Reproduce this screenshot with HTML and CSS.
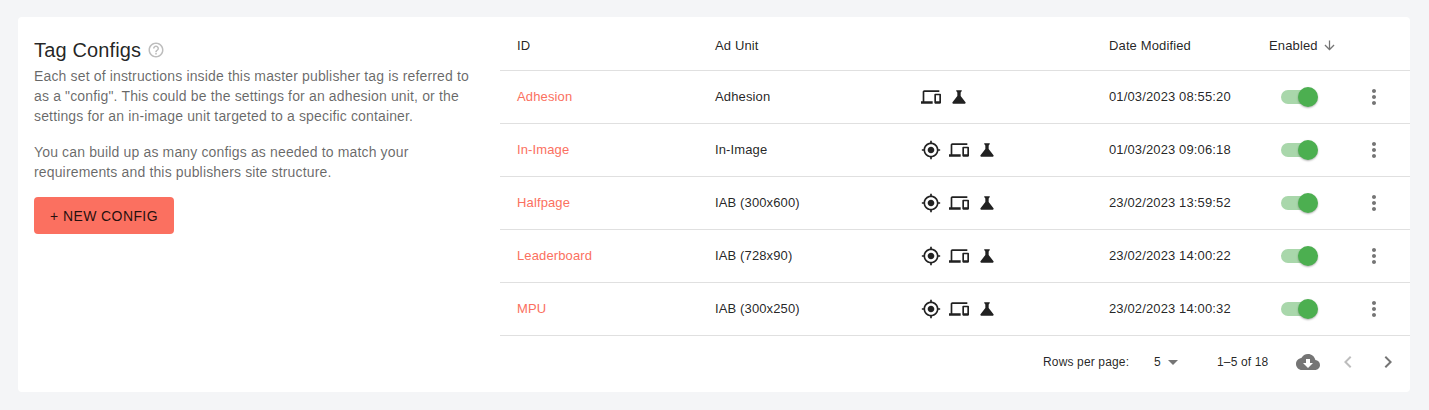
FILE: index.html
```html
<!DOCTYPE html>
<html lang="en">
<head>
<meta charset="utf-8">
<title>Tag Configs</title>
<link rel="stylesheet" href="styles.css">
</head>
<body>
<svg class="defs" width="0" height="0" aria-hidden="true">
  <symbol id="i-gps" viewBox="0 0 24 24"><path d="M12 8c-2.21 0-4 1.79-4 4s1.79 4 4 4 4-1.79 4-4-1.79-4-4-4zm8.94 3c-.46-4.17-3.77-7.48-7.94-7.94V1h-2v2.06C6.83 3.52 3.52 6.83 3.06 11H1v2h2.06c.46 4.17 3.77 7.48 7.94 7.94V23h2v-2.06c4.17-.46 7.48-3.77 7.94-7.94H23v-2h-2.06zM12 19c-3.87 0-7-3.13-7-7s3.13-7 7-7 7 3.13 7 7-3.13 7-7 7z"/></symbol>
  <symbol id="i-devices" viewBox="0 0 24 24"><path d="M4 6h18V4H4c-1.1 0-2 .9-2 2v11H0v3h14v-3H4V6zm19 2h-6c-.55 0-1 .45-1 1v10c0 .55.45 1 1 1h6c.55 0 1-.45 1-1V9c0-.55-.45-1-1-1zm-1 9h-4v-7h4v7z"/></symbol>
  <symbol id="i-science" viewBox="0 0 24 24"><path d="M19.8 18.4 14 10.67V6.5l1.35-1.69c.26-.33.03-.81-.39-.81H9.04c-.42 0-.65.48-.39.81L10 6.5v4.17L4.2 18.4c-.49.66-.02 1.6.8 1.6h14c.82 0 1.29-.94.8-1.6z"/></symbol>
  <symbol id="i-more" viewBox="0 0 24 24"><path d="M12 8c1.1 0 2-.9 2-2s-.9-2-2-2-2 .9-2 2 .9 2 2 2zm0 2c-1.1 0-2 .9-2 2s.9 2 2 2 2-.9 2-2-.9-2-2-2zm0 6c-1.1 0-2 .9-2 2s.9 2 2 2 2-.9 2-2-.9-2-2-2z"/></symbol>
</svg>
<main class="card">
  <section class="intro">
    <h1 class="title">Tag Configs
      <svg class="help" viewBox="0 0 24 24"><path d="M11 18h2v-2h-2v2zm1-16C6.48 2 2 6.48 2 12s4.48 10 10 10 10-4.48 10-10S17.52 2 12 2zm0 18c-4.41 0-8-3.59-8-8s3.59-8 8-8 8 3.59 8 8-3.59 8-8 8zm0-14c-2.21 0-4 1.79-4 4h2c0-1.1.9-2 2-2s2 .9 2 2c0 2-3 1.75-3 5h2c0-2.25 3-2.5 3-5 0-2.21-1.79-4-4-4z"/></svg>
    </h1>
    <p class="copy">Each set of instructions inside this master publisher tag is referred to as a "config". This could be the settings for an adhesion unit, or the settings for an in-image unit targeted to a specific container.</p>
    <p class="copy">You can build up as many configs as needed to match your requirements and this publishers site structure.</p>
    <button class="new-btn" type="button">+ New Config</button>
  </section>
  <section class="table-wrap">
    <table class="configs">
      <colgroup>
        <col class="c-id"><col class="c-unit"><col class="c-icons"><col class="c-date"><col class="c-enabled"><col class="c-menu">
      </colgroup>
      <thead>
        <tr>
          <th>ID</th><th>Ad Unit</th><th></th><th>Date Modified</th>
          <th><span class="sort">Enabled <svg class="sort-icon" viewBox="0 0 24 24"><path d="M20 12l-1.41-1.41L13 16.17V4h-2v12.17l-5.58-5.59L4 12l8 8 8-8z"/></svg></span></th>
          <th></th>
        </tr>
      </thead>
      <tbody>
        <tr>
          <td><a class="link">Adhesion</a></td><td>Adhesion</td>
          <td><div class="icons"><svg class="ic"><use href="#i-devices"/></svg><svg class="ic"><use href="#i-science"/></svg></div></td>
          <td>01/03/2023 08:55:20</td>
          <td><div class="switch"><span class="track"></span><span class="thumb"></span></div></td>
          <td><svg class="more"><use href="#i-more"/></svg></td>
        </tr>
        <tr>
          <td><a class="link">In-Image</a></td><td>In-Image</td>
          <td><div class="icons"><svg class="ic"><use href="#i-gps"/></svg><svg class="ic"><use href="#i-devices"/></svg><svg class="ic"><use href="#i-science"/></svg></div></td>
          <td>01/03/2023 09:06:18</td>
          <td><div class="switch"><span class="track"></span><span class="thumb"></span></div></td>
          <td><svg class="more"><use href="#i-more"/></svg></td>
        </tr>
        <tr>
          <td><a class="link">Halfpage</a></td><td>IAB (300x600)</td>
          <td><div class="icons"><svg class="ic"><use href="#i-gps"/></svg><svg class="ic"><use href="#i-devices"/></svg><svg class="ic"><use href="#i-science"/></svg></div></td>
          <td>23/02/2023 13:59:52</td>
          <td><div class="switch"><span class="track"></span><span class="thumb"></span></div></td>
          <td><svg class="more"><use href="#i-more"/></svg></td>
        </tr>
        <tr>
          <td><a class="link">Leaderboard</a></td><td>IAB (728x90)</td>
          <td><div class="icons"><svg class="ic"><use href="#i-gps"/></svg><svg class="ic"><use href="#i-devices"/></svg><svg class="ic"><use href="#i-science"/></svg></div></td>
          <td>23/02/2023 14:00:22</td>
          <td><div class="switch"><span class="track"></span><span class="thumb"></span></div></td>
          <td><svg class="more"><use href="#i-more"/></svg></td>
        </tr>
        <tr>
          <td><a class="link">MPU</a></td><td>IAB (300x250)</td>
          <td><div class="icons"><svg class="ic"><use href="#i-gps"/></svg><svg class="ic"><use href="#i-devices"/></svg><svg class="ic"><use href="#i-science"/></svg></div></td>
          <td>23/02/2023 14:00:32</td>
          <td><div class="switch"><span class="track"></span><span class="thumb"></span></div></td>
          <td><svg class="more"><use href="#i-more"/></svg></td>
        </tr>
      </tbody>
    </table>
    <footer class="pager">
      <span class="rows-label">Rows per page:</span>
      <span class="rows-select">5 <svg class="caret" viewBox="0 0 24 24"><path d="M7 10l5 5 5-5z"/></svg></span>
      <span class="range">1–5 of 18</span>
      <svg class="cloud" viewBox="0 0 24 24"><path d="M19.35 10.04C18.67 6.59 15.64 4 12 4 9.11 4 6.6 5.64 5.35 8.04 2.34 8.36 0 10.91 0 14c0 3.31 2.69 6 6 6h13c2.76 0 5-2.24 5-5 0-2.64-2.05-4.78-4.65-4.96zM17 13l-5 5-5-5h3V9h4v4h3z"/></svg>
      <svg class="chev off" viewBox="0 0 24 24"><path d="M15.41 7.41 14 6l-6 6 6 6 1.41-1.41L10.83 12z"/></svg>
      <svg class="chev" viewBox="0 0 24 24"><path d="M10 6 8.59 7.41 13.17 12l-4.58 4.59L10 18l6-6z"/></svg>
    </footer>
  </section>
</main>
</body>
</html>
```

FILE: styles.css
```css
* { box-sizing: border-box; }
html, body { height: 100%; }
body {
  margin: 0;
  padding: 17px 19px 18px 18px;
  background: #f4f5f7;
  font-family: "Liberation Sans", Arial, sans-serif;
  color: rgba(0, 0, 0, 0.87);
  overflow: hidden;
}
.defs { position: absolute; }
.card {
  display: flex;
  height: 375px;
  background: #fff;
  border-radius: 4px;
}
.intro { width: 482px; padding: 20px 16px 0; flex: none; }
.title {
  display: flex;
  align-items: center;
  margin: 0 0 3px;
  height: 26px;
  font-size: 20px;
  font-weight: 400;
  line-height: 26px;
  letter-spacing: 0.15px;
}
.help { width: 18px; height: 18px; margin-left: 6px; fill: #bdbdbd; }
.copy {
  margin: 0 0 16px;
  font-size: 14px;
  line-height: 20px;
  letter-spacing: 0.15px;
  color: rgba(0, 0, 0, 0.6);
}
.new-btn {
  display: block;
  width: 140px;
  height: 37px;
  margin-top: -1px;
  padding: 0;
  border: 0;
  border-radius: 4px;
  background: #fb7060;
  color: rgba(0, 0, 0, 0.87);
  font: 400 14px/20px "Liberation Sans", Arial, sans-serif;
  letter-spacing: 0.4px;
  text-transform: uppercase;
}
.table-wrap { flex: 1; min-width: 0; }
.configs {
  width: 910px;
  table-layout: fixed;
  border-collapse: collapse;
  font-size: 13px;
}
.c-id { width: 199px; }
.c-unit { width: 206px; }
.c-icons { width: 188px; }
.c-date { width: 160px; }
.c-enabled { width: 97px; }
.c-menu { width: 60px; }
.configs th, .configs td {
  padding: 0 16px;
  text-align: left;
  font-weight: 400;
  letter-spacing: 0.13px;
  border-bottom: 1px solid #e0e0e0;
}
.configs th:first-child, .configs td:first-child { padding-left: 17px; }
.configs th { padding-top: 5px; }
.configs thead tr { height: 53px; }
.configs tbody tr { height: 53px; }
.link { color: #fb7060; }
.sort { display: inline-flex; align-items: center; gap: 4px; }
.sort-icon { width: 15px; height: 15px; fill: #757575; }
.icons { display: flex; gap: 8px; }
.ic { width: 20px; height: 20px; fill: #212121; display: block; }
.switch { position: relative; width: 38px; height: 20px; margin-left: 12px; }
.track {
  position: absolute;
  left: 0; top: 3px;
  width: 34px; height: 14px;
  border-radius: 7px;
  background: #a9d7ab;
}
.thumb {
  position: absolute;
  left: 17px; top: 0;
  width: 20px; height: 20px;
  border-radius: 50%;
  background: #4caf50;
  box-shadow: 0 1px 2px rgba(0, 0, 0, 0.3);
}
.more { display: block; width: 24px; height: 24px; margin-left: -4px; fill: #757575; }
.pager {
  display: flex;
  align-items: center;
  height: 53px;
  padding-left: 543px;
  font-size: 12px;
  letter-spacing: 0.15px;
}
.rows-label { width: 111px; }
.rows-select { display: flex; align-items: center; width: 63px; }
.caret { width: 24px; height: 24px; fill: #757575; }
.range { width: 79px; }
.cloud { width: 24px; height: 24px; fill: #757575; }
.chev { width: 24px; height: 24px; fill: #757575; margin-left: 16px; }
.chev.off { fill: #bdbdbd; }
```
